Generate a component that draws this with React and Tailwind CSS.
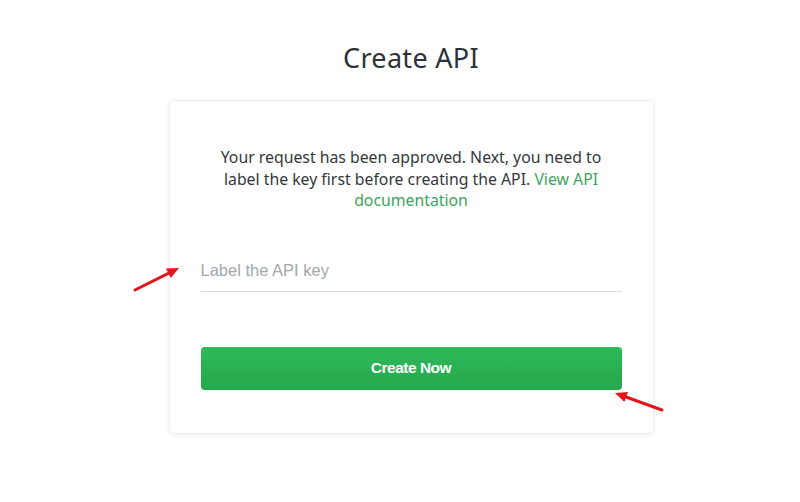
import { useState } from "react";

// Flechas rojas de anotación sobre la captura
function Arrow({ x1, y1, x2, y2 }) {
  const ang = Math.atan2(y2 - y1, x2 - x1);
  const len = 13, w = 0.42;
  const p1 = [x2 - len * Math.cos(ang - w), y2 - len * Math.sin(ang - w)];
  const p2 = [x2 - len * Math.cos(ang + w), y2 - len * Math.sin(ang + w)];
  return (
    <g>
      <line x1={x1} y1={y1} x2={x2 - 8 * Math.cos(ang)} y2={y2 - 8 * Math.sin(ang)} stroke="#e3161b" strokeWidth="3" strokeLinecap="round" />
      <polygon points={`${x2},${y2} ${p1[0]},${p1[1]} ${p2[0]},${p2[1]}`} fill="#e3161b" />
    </g>
  );
}

export default function App() {
  const [label, setLabel] = useState("");

  return (
    <div className="relative w-[800px] h-[502px] bg-white overflow-hidden" style={{ fontFamily: '"Noto Sans", "Open Sans", sans-serif' }}>
      <div className="pl-[22px] pt-[38px]">
        <h1 className="text-center text-[27px] leading-[40px] text-[#2d3339] tracking-[0.3px]">Create API</h1>

        <div className="mx-auto mt-[22px] w-[485px] h-[334px] bg-white rounded-[5px] border border-[#eef0f2] shadow-[0_1px_4px_rgba(0,0,0,0.08)] px-[31px] pt-[46px]">
          <p className="text-center text-[15.8px] leading-[21.5px] text-[#33383d] px-[10px]">
            Your request has been approved. Next, you need to label the key first before creating the API.{" "}
            <a href="#" className="text-[#3ba55c]">View API documentation</a>
          </p>

          <div className="mt-[39px] border-b border-[#dcdfe2]">
            <input
              value={label}
              onChange={(e) => setLabel(e.target.value)}
              placeholder="Label the API key"
              className="w-full h-[40px] outline-none text-[16.5px] text-[#333] placeholder:text-[#a3a7ab]"
              style={{ fontFamily: '"Liberation Sans", Arial, sans-serif' }}
            />
          </div>

          <button
            className="mt-[55px] w-full h-[43px] rounded-[4px] bg-gradient-to-b from-[#2fb95a] to-[#24a84c] text-white font-bold text-[15.5px] tracking-[-0.5px]"
            style={{ fontFamily: '"Liberation Sans", Arial, sans-serif' }}
          >
            Create Now
          </button>
        </div>
      </div>

      <svg className="absolute inset-0 pointer-events-none" width="800" height="502">
        <Arrow x1={135} y1={290} x2={179} y2={268} />
        <Arrow x1={662} y1={410} x2={615} y2={393} />
      </svg>
    </div>
  );
}
